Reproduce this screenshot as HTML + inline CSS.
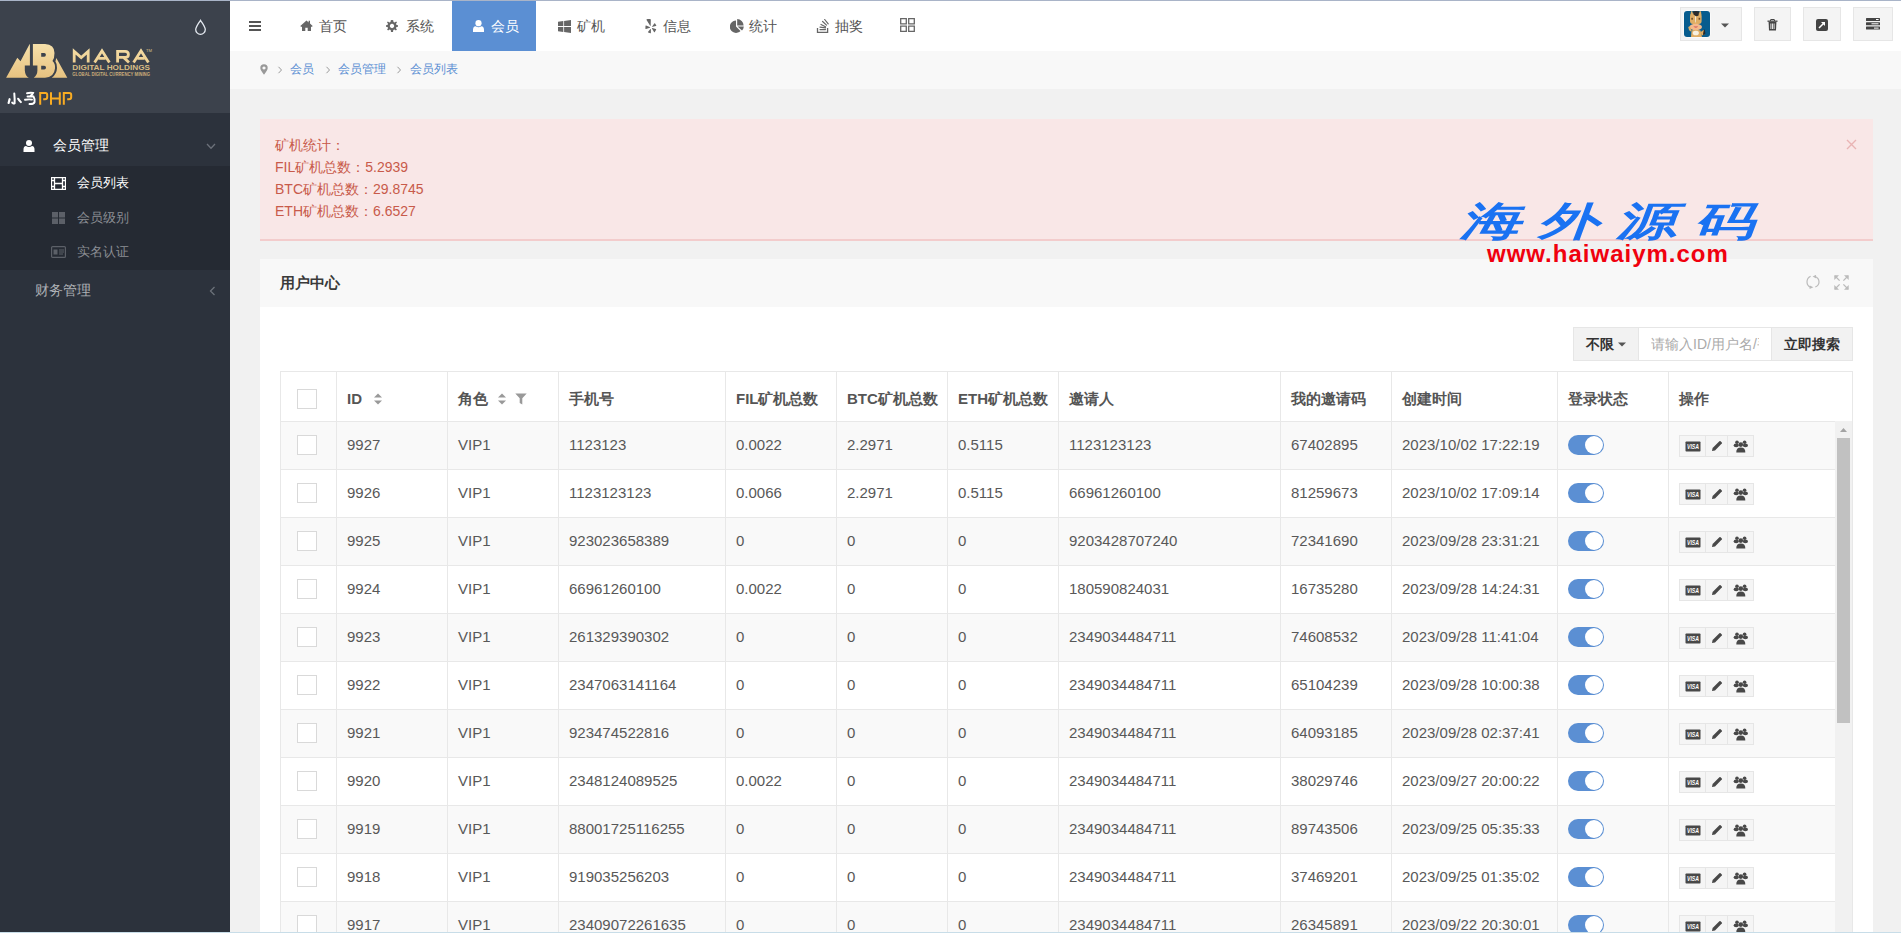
<!DOCTYPE html>
<html><head><meta charset="utf-8">
<style>
*{margin:0;padding:0;box-sizing:border-box}
html,body{width:1901px;height:933px;overflow:hidden;background:#f1f1f1;font-family:"Liberation Sans",sans-serif;font-size:14px;color:#555}
.abs{position:absolute}
.hb{background:#f4f4f4;border:1px solid #e6e6e6}
#topline{position:absolute;left:0;top:0;width:1901px;height:1px;background:#a9b4c8;z-index:50}
#botline{position:absolute;left:0;top:932px;width:1901px;height:1px;background:#c8dde8;z-index:50}
#side{position:absolute;left:0;top:0;width:230px;height:933px;background:#2c323c}
#logo{position:absolute;left:0;top:0;width:230px;height:113px;background:#3c424c}
#sub{position:absolute;left:0;top:166px;width:230px;height:104px;background:#252a33}
.mi{position:absolute;white-space:nowrap;font-size:14px}
#hdr{position:absolute;left:230px;top:0;width:1671px;height:51px;background:#fff}
.tab{position:absolute;top:1px;height:50px;line-height:50px;color:#555;font-size:14px;white-space:nowrap}
.tab.on{background:#5b8fd3;color:#fff}
#bc{position:absolute;left:230px;top:51px;width:1671px;height:38px;background:#f8f8f8;font-size:13px;color:#5b8fd3}
#alert{position:absolute;left:260px;top:119px;width:1613px;height:122px;background:#f9e7e7;border-bottom:2px solid #f3cccc;color:#c85a4a;font-size:14px}
#panel{position:absolute;left:260px;top:259px;width:1613px;height:680px;background:#fff}
#phd{position:absolute;left:0;top:0;width:1613px;height:48px;background:#f8f8f8}
.row{position:absolute;left:281px;width:1554px;height:48px}
.hl{position:absolute;left:280px;width:1573px;height:1px;background:#e8e8e8}
.vl{position:absolute;top:371px;width:1px;height:562px;background:#e8e8e8}
.td{position:absolute;height:48px;line-height:48px;white-space:nowrap;color:#585858;font-size:15px}
.th{position:absolute;top:374px;height:50px;line-height:50px;white-space:nowrap;color:#555;font-weight:bold;font-size:15px}
.cb{position:absolute;left:297px;width:20px;height:20px;border:1px solid #d9d9d9;background:#fff}
.sw{position:absolute;left:1568px;width:36px;height:20px;border-radius:10px;background:#5b8fd3}
.sw i{position:absolute;right:1.5px;top:1px;width:18px;height:18px;border-radius:50%;background:#fff}
.ops{position:absolute;left:1679px;height:22px;display:flex}
.ops b{display:flex;align-items:center;justify-content:center;height:22px;border:1px solid #e6e6e6;background:#f5f5f5;margin-right:-1px}
.o1{width:27px}.o2{width:23px}.o3{width:27px}
</style></head><body>
<div id="topline"></div><div id="botline"></div>
<div id="side">
 <div id="logo">
  <svg class="abs" style="left:0;top:0" width="230" height="113" viewBox="0 0 230 113">
   <defs><linearGradient id="gold" x1="0" y1="44" x2="0" y2="78" gradientUnits="userSpaceOnUse"><stop offset="0" stop-color="#f6e0aa"/><stop offset="1" stop-color="#e7c280"/></linearGradient></defs>
   <path d="M200.5 20.3 C198.5 23.5 195.7 27 195.7 29.5 a4.8 4.8 0 0 0 9.6 0 C205.3 27 202.5 23.5 200.5 20.3Z" fill="none" stroke="#e4e9f0" stroke-width="1.3"/>
   <g fill="url(#gold)">
    <path d="M6.1 77.8 L17.3 57.8 L20.5 61.2 L29.5 44.3 L29.9 44.3 L29.9 65.4 L24.8 65.4 L24.8 70.5 Q25.3 76.5 28.8 77.8 Z"/>
    <path fill-rule="evenodd" d="M32.9 44 L45 44 Q54.5 44.5 54.5 53 Q54.5 58 52.5 61 Q55.5 63.5 55 68.5 Q54 77.5 45 77.8 L33.8 77.8 Q37.4 75 37.4 70.5 L37.4 65.4 L32.9 65.4 Z M41.2 53 L44.2 53 Q45.9 53 45.9 54.85 Q45.9 56.7 44.2 56.7 L41.2 56.7Z M41.2 65.7 L44.2 65.7 Q46 65.7 46 67.6 Q46 69.5 44.2 69.5 L41.2 69.5Z"/>
    <path d="M56.3 58 L67.3 77.8 L51.8 77.8 Q56.8 74 57 68 Q57 63.5 55.4 61.6 Z"/>
   </g>
   <g fill="none" stroke="url(#gold)" stroke-width="2.8" stroke-linejoin="miter">
    <path d="M74.2 62.5 V51.4 L81.2 57.6 L88.2 51.4 V62.5"/>
    <path d="M94.6 62.5 L102 50.8 L109.4 62.5 M98.4 58.4 H105.6"/>
    <path d="M117.6 62.5 V51.4 H125.2 Q128.4 51.4 128.4 54.5 Q128.4 57.4 125.2 57.4 H117.6 M123.6 57.4 L129 62.5"/>
    <path d="M133.6 62.5 L141 50.8 L148.4 62.5 M137.4 58.4 H144.6"/>
   </g>
   <text x="146" y="51.5" font-family="Liberation Sans" font-size="4.2" fill="#d9c08a">TM</text>
   <text x="72.3" y="70" font-family="Liberation Sans" font-weight="bold" font-size="7.2" fill="#d8bc85" textLength="77.7" lengthAdjust="spacingAndGlyphs">DIGITAL HOLDINGS</text>
   <text x="72.3" y="76" font-family="Liberation Sans" font-weight="bold" font-size="5.4" fill="#c9ae7a" textLength="77.7" lengthAdjust="spacingAndGlyphs">GLOBAL DIGITAL CURRENCY MINING</text>
   <g fill="none" stroke="#fff" stroke-linecap="round">
    <path d="M14.3 93.5 Q14.8 99 14.6 103.2 Q13.5 104.2 12.2 102.6" stroke-width="2"/>
    <path d="M9.6 99.2 Q9 101.5 8.6 103" stroke-width="2.2"/>
    <path d="M18.2 98.8 Q19.5 101 20.8 102" stroke-width="2.2"/>
    <path d="M27 93.2 Q30.5 92.4 33 93 Q32 95 30.3 96 M27.5 96.5 H33.5 Q35 99 34.6 102 Q33.5 104.4 29.5 104 M25 99.8 Q29 99 32 99.6" stroke-width="1.9"/>
   </g>
   <g fill="none" stroke="#f9ac22" stroke-width="2">
    <path d="M40.2 104.8 V93 H45.6 Q47.2 93 47.2 95 V97 Q47.2 99.2 45 99.2 H43.2"/>
    <path d="M51 92.3 V104.8 M59.8 92.3 V104.8 M51 98.4 H59.8"/>
    <path d="M63.8 104.8 V93 H69.4 Q71.2 93 71.2 95 V97 Q71.2 99.2 69 99.2 H67.2"/>
   </g>
  </svg>
 </div>
 <div id="sub"></div>
 <svg class="abs" style="left:23px;top:140px" width="12" height="12" viewBox="0 0 12 12"><circle cx="6" cy="3" r="3" fill="#fff"/><path d="M0.5 12 L0.5 9.5 Q0.5 6.3 3 6 Q6 8 9 6 Q11.5 6.3 11.5 9.5 L11.5 12Z" fill="#fff"/></svg>
 <div class="mi" style="left:53px;top:137px;color:#fff">会员管理</div>
 <svg class="abs" style="left:206px;top:143px" width="10" height="7" viewBox="0 0 10 7"><path d="M1 1 L5 5.2 L9 1" fill="none" stroke="#6c717a" stroke-width="1.3"/></svg>
 <svg class="abs" style="left:51px;top:177px" width="15" height="13" viewBox="0 0 15 13"><path d="M0.5 0.5h14v12h-14z M3.5 0.5v12 M11.5 0.5v12 M3.5 6.5h8 M0.5 3.5h3 M0.5 9.5h3 M11.5 3.5h3 M11.5 9.5h3" fill="none" stroke="#fff" stroke-width="1.3"/></svg>
 <div class="mi" style="left:77px;top:174px;color:#fff;font-size:13px">会员列表</div>
 <svg class="abs" style="left:52px;top:212px" width="13" height="12" viewBox="0 0 13 12"><rect x="0" y="0" width="6" height="5.5" fill="#5c6068"/><rect x="7" y="0" width="6" height="5.5" fill="#5c6068"/><rect x="0" y="6.5" width="6" height="5.5" fill="#5c6068"/><rect x="7" y="6.5" width="6" height="5.5" fill="#5c6068"/></svg>
 <div class="mi" style="left:77px;top:209px;color:#8b8e94;font-size:13px">会员级别</div>
 <svg class="abs" style="left:51px;top:246px" width="15" height="12" viewBox="0 0 15 12"><rect x="0.6" y="0.6" width="13.8" height="10.8" rx="1" fill="none" stroke="#5c6068" stroke-width="1.2"/><rect x="2.5" y="3.5" width="4" height="5" fill="#5c6068"/><path d="M8 4h5M8 6h5M8 8h4" stroke="#5c6068" stroke-width="1"/></svg>
 <div class="mi" style="left:77px;top:243px;color:#8b8e94;font-size:13px">实名认证</div>
 <div class="mi" style="left:35px;top:282px;color:#aeb1b6">财务管理</div>
 <svg class="abs" style="left:209px;top:286px" width="7" height="10" viewBox="0 0 7 10"><path d="M5.5 1 L1.5 5 L5.5 9" fill="none" stroke="#6c717a" stroke-width="1.3"/></svg>
</div>
<div id="hdr">
 <svg class="abs" style="left:19px;top:21px" width="12" height="10" viewBox="0 0 12 10"><path d="M0 1h12M0 5h12M0 9h12" stroke="#555" stroke-width="2"/></svg>
 <svg class="abs" style="left:70px;top:20px" width="13" height="11" viewBox="0 0 13 11"><path d="M6.5 0.5 L0.3 6 L1.2 7 L2 6.4 L2 11 L5.3 11 L5.3 7.8 L7.7 7.8 L7.7 11 L11 11 L11 6.4 L11.8 7 L12.7 6 L10 3.6 L10 0.8 L8.6 0.8 L8.6 2.4 Z" fill="#666"/></svg>
 <div class="tab" style="left:89px">首页</div>
 <svg class="abs" style="left:156px;top:20px" width="12" height="12" viewBox="0 0 12 12"><path d="M6 0 L7.2 0.2 L7.5 1.9 L8.7 2.4 L10.1 1.4 L11 2.3 L10 3.8 L10.5 5 L12 5.3 L12 6.7 L10.4 7 L10 8.2 L10.9 9.6 L9.9 10.6 L8.5 9.6 L7.3 10.1 L7 12 L5 12 L4.7 10.1 L3.5 9.6 L2.1 10.6 L1.1 9.6 L2 8.2 L1.6 7 L0 6.7 L0 5.3 L1.5 5 L2 3.8 L1 2.3 L1.9 1.4 L3.3 2.4 L4.5 1.9 L4.8 0.2Z M6 3.8 A2.2 2.2 0 1 0 6.01 3.8Z" fill="#666" fill-rule="evenodd"/></svg>
 <div class="tab" style="left:176px">系统</div>
 <div class="tab on" style="left:222px;width:84px"></div>
 <svg class="abs" style="left:243px;top:20px" width="11" height="12" viewBox="0 0 11 12"><circle cx="5.5" cy="3.2" r="3.1" fill="#fff"/><path d="M0 12 L0 9.8 Q0 6.5 2.6 6.2 Q5.5 8.2 8.4 6.2 Q11 6.5 11 9.8 L11 12Z" fill="#fff"/></svg>
 <div class="tab" style="left:261px;color:#fff">会员</div>
 <svg class="abs" style="left:328px;top:20px" width="13" height="13" viewBox="0 0 13 13"><path d="M0 1.8 L5.3 1.1 L5.3 6.1 L0 6.1Z M6.1 1 L13 0 L13 6.1 L6.1 6.1Z M0 6.9 L5.3 6.9 L5.3 11.9 L0 11.2Z M6.1 6.9 L13 6.9 L13 13 L6.1 12Z" fill="#666"/></svg>
 <div class="tab" style="left:347px">矿机</div>
 <svg class="abs" style="left:415px;top:19px" width="12" height="15" viewBox="0 0 12 15"><path d="M1.4 0.8 Q1.6 0.1 2.6 0.1 L5 0 Q5.8 0 5.8 0.8 L5.7 6.5 Q5.5 7.2 5 6.6Z" fill="#666"/><path d="M6.8 8 L9.3 4.4 Q9.7 4 10.1 4.4 L11.3 6.4 Q11.4 7 10.9 7.1Z" fill="#666"/><path d="M0.5 6.8 Q0.6 6.3 1.1 6.4 L5.2 8.3 Q5.3 8.7 4.9 8.8 L1 10 Q0.5 10 0.4 9.5Z" fill="#666"/><path d="M2.9 12.9 L5.4 10 Q5.9 9.9 5.9 10.3 L5.9 13.9 Q5.8 14.4 5.3 14.3 L3.2 13.6Z" fill="#666"/><path d="M6.8 9.2 Q6.9 8.8 7.3 8.9 L10.9 10.1 Q11.3 10.4 11.1 10.8 L9.8 13.1 Q9.4 13.5 9 13.1Z" fill="#666"/></svg>
 <div class="tab" style="left:433px">信息</div>
 <svg class="abs" style="left:500px;top:19px" width="14" height="14" viewBox="0 0 14 14"><path d="M6 1.5 L6 7.5 L10.5 12 A6.2 6.2 0 1 1 6 1.5Z" fill="#666"/><path d="M7.2 0 A6.6 6.6 0 0 1 13.6 6.4 L7.2 6.4Z" fill="#666"/><path d="M7.6 7.6 L13.8 7.6 A6.6 6.6 0 0 1 12 11.6Z" fill="#666"/></svg>
 <div class="tab" style="left:519px">统计</div>
 <svg class="abs" style="left:586px;top:19px" width="14" height="15" viewBox="0 0 14 15"><path d="M1.5 9 V13.4 H11.6 V9" fill="none" stroke="#666" stroke-width="1.3"/><path d="M4 10.6 H9.5 M4 8.2 L9.5 8.9 M5 5.5 L9.5 7.7 M6.6 2.5 L10.5 6.1 M8.7 0.5 L12.2 4.9" stroke="#666" stroke-width="1.2" stroke-linecap="round"/></svg>
 <div class="tab" style="left:605px">抽奖</div>
 <svg class="abs" style="left:670px;top:18px" width="15" height="14" viewBox="0 0 15 14"><path d="M0.7 0.7h5.6v5.2h-5.6z M8.7 0.7h5.6v5.2h-5.6z M0.7 8.1h5.6v5.2h-5.6z M8.7 8.1h5.6v5.2h-5.6z" fill="none" stroke="#666" stroke-width="1.3"/></svg>
 <!-- right buttons -->
 <div class="abs hb" style="left:1450px;top:7px;width:62px;height:34px"></div>
 <svg class="abs" style="left:1453px;top:10px" width="28" height="28" viewBox="-1 -1 28 28"><rect x="-0.5" y="-0.5" width="27" height="27" rx="4" fill="#fff"/><rect width="26" height="26" rx="3" fill="#075c8e"/><path d="M6.5 4 L7 0.3 L8.3 0.3 L9 3.5Z M15 3.5 L15.6 0.3 L17 0.3 L17.4 4Z" fill="#e0ae65"/><rect x="6" y="2.2" width="11.6" height="10.8" rx="3" fill="#e0ae65"/><path d="M9 0.6 Q12 -0.5 15 0.6 L14.6 4.5 Q13 5.5 12 5.3 L9.5 3.5Z" fill="#2b2b2b"/><path d="M10.9 5.3 L12.2 5.3 L11.9 11.5 L11.3 11.5Z" fill="#f2ead8"/><rect x="7.3" y="6.8" width="1.6" height="1.9" fill="#6b4a2a"/><rect x="14.6" y="6.8" width="1.6" height="1.9" fill="#6b4a2a"/><ellipse cx="11.7" cy="16" rx="6.3" ry="3.2" fill="#f5b98a"/><path d="M9.4 15.2 Q11.8 18.6 14.2 15.2Z" fill="#d9736a"/><path d="M7 26 L7.5 19.5 Q11.7 18.2 16.5 19.5 L18 26Z" fill="#e0ae65"/><ellipse cx="11.8" cy="22" rx="3.1" ry="2.3" fill="#f6f0e0"/><path d="M4.2 16 Q5 15 6 15.6 L7.6 19.5 L6.5 20.5 Q4.5 19 4.2 16Z" fill="#e0ae65"/><path d="M16.8 21 L19.5 19 L21 20 L20.8 23 Q19 24.8 17.5 24Z" fill="#e0ae65"/><path d="M19.8 19 L20.8 18.6 L21.4 22.5 L19.6 24.5 L19 23Z" fill="#2a2a2a"/></svg>
 <svg class="abs" style="left:1491px;top:23px" width="8" height="5" viewBox="0 0 8 5"><path d="M0 0.5h8L4 4.5Z" fill="#555"/></svg>
 <div class="abs hb" style="left:1524px;top:7px;width:37px;height:34px"></div>
 <svg class="abs" style="left:1537px;top:19px" width="11" height="12" viewBox="0 0 11 12"><path d="M0.5 2.2h10" stroke="#444" stroke-width="1.3"/><path d="M3.5 2 L3.5 0.8 Q3.5 0.5 4 0.5 L7 0.5 Q7.5 0.5 7.5 0.8 L7.5 2" fill="none" stroke="#444" stroke-width="1"/><path d="M1.6 3 L9.4 3 L9 11.5 L2 11.5Z" fill="#444"/><path d="M3.9 4.5v5.5M5.5 4.5v5.5M7.1 4.5v5.5" stroke="#f4f4f4" stroke-width="0.9"/></svg>
 <div class="abs hb" style="left:1573px;top:7px;width:38px;height:34px"></div>
 <svg class="abs" style="left:1586px;top:19px" width="12" height="12" viewBox="0 0 12 12"><rect width="12" height="12" rx="2" fill="#444"/><path d="M3 9 L8.2 3.8" stroke="#fff" stroke-width="1.5"/><path d="M5 3 L9 3 L9 7Z" fill="#fff"/></svg>
 <div class="abs hb" style="left:1623px;top:7px;width:40px;height:34px"></div>
 <svg class="abs" style="left:1636px;top:18px" width="14" height="12" viewBox="0 0 14 12"><rect x="0" y="0" width="14" height="3" rx="0.5" fill="#444"/><rect x="0" y="4.3" width="14" height="3" rx="0.5" fill="#444"/><rect x="0" y="8.6" width="14" height="3" rx="0.5" fill="#444"/><path d="M10 1.5h2.6M5.5 5.8h7M8 10.1h4.6" stroke="#fff" stroke-width="1"/></svg>
</div>
<div id="bc">
 <svg class="abs" style="left:30px;top:13px" width="8" height="11" viewBox="0 0 8 11"><path d="M4 0.3 A3.7 3.7 0 0 1 7.7 4 Q7.7 6 4 10.8 Q0.3 6 0.3 4 A3.7 3.7 0 0 1 4 0.3Z M4 2.4 A1.6 1.6 0 1 0 4.01 2.4Z" fill="#999" fill-rule="evenodd"/></svg>
 <svg class="abs" style="left:47px;top:15px" width="6" height="8" viewBox="0 0 6 8"><path d="M1.5 0.8 L4.5 4 L1.5 7.2" fill="none" stroke="#999" stroke-width="1"/></svg>
 <div class="abs" style="left:60px;top:10px;font-size:12px;line-height:16px">会员</div>
 <svg class="abs" style="left:95px;top:15px" width="6" height="8" viewBox="0 0 6 8"><path d="M1.5 0.8 L4.5 4 L1.5 7.2" fill="none" stroke="#999" stroke-width="1"/></svg>
 <div class="abs" style="left:108px;top:10px;font-size:12px;line-height:16px">会员管理</div>
 <svg class="abs" style="left:166px;top:15px" width="6" height="8" viewBox="0 0 6 8"><path d="M1.5 0.8 L4.5 4 L1.5 7.2" fill="none" stroke="#999" stroke-width="1"/></svg>
 <div class="abs" style="left:180px;top:10px;font-size:12px;line-height:16px">会员列表</div>
</div>
<div id="alert">
 <div class="abs" style="left:15px;top:15px;line-height:22px">矿机统计：<br>FIL矿机总数：5.2939<br>BTC矿机总数：29.8745<br>ETH矿机总数：6.6527</div>
 <svg class="abs" style="left:1586px;top:20px" width="11" height="11" viewBox="0 0 11 11"><path d="M1 1L10 10M10 1L1 10" stroke="#e9b4b4" stroke-width="1.4"/></svg>
</div>
<div id="panel"><div id="phd"><div class="abs" style="left:20px;top:0;line-height:48px;font-weight:bold;color:#3a3a3a;font-size:15px">用户中心</div>
 <svg class="abs" style="left:1546px;top:16px" width="14" height="15" viewBox="0 0 14 15"><path d="M4.6 1.3 Q1 3 1 7 Q1 10.8 4.8 12.4" fill="none" stroke="#bbb" stroke-width="1.2"/><path d="M3.8 10.4 L7.4 12.2 L3.6 14Z" fill="#bbb"/><path d="M9.3 12 Q13 10.5 13 7 Q13 3 9 1.5" fill="none" stroke="#bbb" stroke-width="1.2"/><path d="M10 -0.2 L6.6 1.5 L10.2 3.4Z" fill="#bbb"/></svg><svg class="abs" style="left:1574px;top:16px" width="15" height="15" viewBox="0 0 15 15"><path d="M1 1 L5.6 5.6 M14 1 L9.4 5.6 M1 14 L5.6 9.4 M14 14 L9.4 9.4" stroke="#bbb" stroke-width="1.3"/><path d="M0.3 0.3 H5 L0.3 5Z M14.7 0.3 H10 L14.7 5Z M0.3 14.7 H5 L0.3 10Z M14.7 14.7 H10 L14.7 10Z" fill="#bbb"/></svg>
</div>
 <div class="abs" style="left:1313px;top:68px;width:280px;height:34px;border:1px solid #e6e6e6;background:#fff"></div>
 <div class="abs" style="left:1313px;top:68px;width:66px;height:34px;border:1px solid #e6e6e6;background:#f2f2f2"></div>
 <div class="abs" style="left:1326px;top:68px;line-height:34px;color:#333;font-size:14px;font-weight:bold">不限</div>
 <svg class="abs" style="left:1358px;top:83px" width="8" height="5" viewBox="0 0 8 5"><path d="M0 0.5h8L4 4.5Z" fill="#555"/></svg>
 <div class="abs" style="left:1391px;top:68px;width:108px;overflow:hidden;line-height:34px;color:#aaa;font-size:14px;white-space:nowrap">请输入ID/用户名/手机号</div>
 <div class="abs" style="left:1511px;top:68px;width:82px;height:34px;border:1px solid #e6e6e6;background:#f2f2f2"></div>
 <div class="abs" style="left:1524px;top:68px;line-height:34px;color:#333;font-size:14px;font-weight:bold">立即搜索</div>
</div>
<div class="abs" style="left:280px;top:371px;width:1573px;height:562px;border:1px solid #e8e8e8;border-bottom:none;background:#fff"></div>
<div id="tbl">
 <div class="cb" style="top:389px"></div>
 <div class="th" style="left:347px">ID</div>
 <svg class="abs" style="left:373px;top:393px" width="10" height="12" viewBox="0 0 10 12"><path d="M5 0.5L9 4.5H1Z M5 11.5L9 7.5H1Z" fill="#999"/></svg>
 <div class="th" style="left:458px">角色</div>
 <svg class="abs" style="left:497px;top:393px" width="10" height="12" viewBox="0 0 10 12"><path d="M5 0.5L9 4.5H1Z M5 11.5L9 7.5H1Z" fill="#999"/></svg>
 <svg class="abs" style="left:515px;top:393px" width="12" height="12" viewBox="0 0 12 12"><path d="M0.3 0.5H11.7L7.3 5.2V11.5L4.7 10V5.2Z" fill="#999"/></svg>
 <div class="th" style="left:569px">手机号</div>
 <div class="th" style="left:736px">FIL矿机总数</div>
 <div class="th" style="left:847px">BTC矿机总数</div>
 <div class="th" style="left:958px">ETH矿机总数</div>
 <div class="th" style="left:1069px">邀请人</div>
 <div class="th" style="left:1291px">我的邀请码</div>
 <div class="th" style="left:1402px">创建时间</div>
 <div class="th" style="left:1568px">登录状态</div>
 <div class="th" style="left:1679px">操作</div>
<div class="row" style="top:421px;background:#f9f9f9"></div>
<div class="cb" style="top:435px"></div>
<div class="td" style="left:347px;top:421px">9927</div>
<div class="td" style="left:458px;top:421px">VIP1</div>
<div class="td" style="left:569px;top:421px">1123123</div>
<div class="td" style="left:736px;top:421px">0.0022</div>
<div class="td" style="left:847px;top:421px">2.2971</div>
<div class="td" style="left:958px;top:421px">0.5115</div>
<div class="td" style="left:1069px;top:421px">1123123123</div>
<div class="td" style="left:1291px;top:421px">67402895</div>
<div class="td" style="left:1402px;top:421px">2023/10/02 17:22:19</div>
<div class="sw" style="top:435px"><i></i></div>
<div class="ops" style="top:435px"><b class="o1"><svg width="16" height="11" viewBox="0 0 16 11" style="margin-top:1px"><rect x="0.5" y="0.5" width="15" height="10" rx="0.8" fill="#484848"/><text x="8" y="7.6" font-size="6.8" font-weight="bold" font-style="italic" fill="#fff" text-anchor="middle" font-family="Liberation Sans" textLength="12" lengthAdjust="spacingAndGlyphs">VISA</text></svg></b><b class="o2"><svg width="12" height="12" viewBox="0 0 12 12"><path d="M1 11 L1.6 8 L8.4 1.2 Q9 0.7 9.6 1.2 L10.8 2.4 Q11.3 3 10.8 3.6 L4 10.4 Z" fill="#484848"/></svg></b><b class="o3"><svg width="16" height="13" viewBox="0 0 16 13" style="margin-top:1px"><circle cx="4" cy="2.2" r="1.8" fill="#484848"/><circle cx="11.6" cy="2.2" r="1.8" fill="#484848"/><ellipse cx="3.2" cy="5.4" rx="2.6" ry="1.8" fill="#484848"/><ellipse cx="12.4" cy="5.4" rx="2.6" ry="1.8" fill="#484848"/><circle cx="7.8" cy="4.6" r="2.3" fill="#484848"/><path d="M3.3 12.6 Q3 7.4 7.8 7.4 Q12.6 7.4 12.3 12.6 Z" fill="#484848"/></svg></b></div>
<div class="row" style="top:469px;background:#fff"></div>
<div class="cb" style="top:483px"></div>
<div class="td" style="left:347px;top:469px">9926</div>
<div class="td" style="left:458px;top:469px">VIP1</div>
<div class="td" style="left:569px;top:469px">1123123123</div>
<div class="td" style="left:736px;top:469px">0.0066</div>
<div class="td" style="left:847px;top:469px">2.2971</div>
<div class="td" style="left:958px;top:469px">0.5115</div>
<div class="td" style="left:1069px;top:469px">66961260100</div>
<div class="td" style="left:1291px;top:469px">81259673</div>
<div class="td" style="left:1402px;top:469px">2023/10/02 17:09:14</div>
<div class="sw" style="top:483px"><i></i></div>
<div class="ops" style="top:483px"><b class="o1"><svg width="16" height="11" viewBox="0 0 16 11" style="margin-top:1px"><rect x="0.5" y="0.5" width="15" height="10" rx="0.8" fill="#484848"/><text x="8" y="7.6" font-size="6.8" font-weight="bold" font-style="italic" fill="#fff" text-anchor="middle" font-family="Liberation Sans" textLength="12" lengthAdjust="spacingAndGlyphs">VISA</text></svg></b><b class="o2"><svg width="12" height="12" viewBox="0 0 12 12"><path d="M1 11 L1.6 8 L8.4 1.2 Q9 0.7 9.6 1.2 L10.8 2.4 Q11.3 3 10.8 3.6 L4 10.4 Z" fill="#484848"/></svg></b><b class="o3"><svg width="16" height="13" viewBox="0 0 16 13" style="margin-top:1px"><circle cx="4" cy="2.2" r="1.8" fill="#484848"/><circle cx="11.6" cy="2.2" r="1.8" fill="#484848"/><ellipse cx="3.2" cy="5.4" rx="2.6" ry="1.8" fill="#484848"/><ellipse cx="12.4" cy="5.4" rx="2.6" ry="1.8" fill="#484848"/><circle cx="7.8" cy="4.6" r="2.3" fill="#484848"/><path d="M3.3 12.6 Q3 7.4 7.8 7.4 Q12.6 7.4 12.3 12.6 Z" fill="#484848"/></svg></b></div>
<div class="row" style="top:517px;background:#f9f9f9"></div>
<div class="cb" style="top:531px"></div>
<div class="td" style="left:347px;top:517px">9925</div>
<div class="td" style="left:458px;top:517px">VIP1</div>
<div class="td" style="left:569px;top:517px">923023658389</div>
<div class="td" style="left:736px;top:517px">0</div>
<div class="td" style="left:847px;top:517px">0</div>
<div class="td" style="left:958px;top:517px">0</div>
<div class="td" style="left:1069px;top:517px">9203428707240</div>
<div class="td" style="left:1291px;top:517px">72341690</div>
<div class="td" style="left:1402px;top:517px">2023/09/28 23:31:21</div>
<div class="sw" style="top:531px"><i></i></div>
<div class="ops" style="top:531px"><b class="o1"><svg width="16" height="11" viewBox="0 0 16 11" style="margin-top:1px"><rect x="0.5" y="0.5" width="15" height="10" rx="0.8" fill="#484848"/><text x="8" y="7.6" font-size="6.8" font-weight="bold" font-style="italic" fill="#fff" text-anchor="middle" font-family="Liberation Sans" textLength="12" lengthAdjust="spacingAndGlyphs">VISA</text></svg></b><b class="o2"><svg width="12" height="12" viewBox="0 0 12 12"><path d="M1 11 L1.6 8 L8.4 1.2 Q9 0.7 9.6 1.2 L10.8 2.4 Q11.3 3 10.8 3.6 L4 10.4 Z" fill="#484848"/></svg></b><b class="o3"><svg width="16" height="13" viewBox="0 0 16 13" style="margin-top:1px"><circle cx="4" cy="2.2" r="1.8" fill="#484848"/><circle cx="11.6" cy="2.2" r="1.8" fill="#484848"/><ellipse cx="3.2" cy="5.4" rx="2.6" ry="1.8" fill="#484848"/><ellipse cx="12.4" cy="5.4" rx="2.6" ry="1.8" fill="#484848"/><circle cx="7.8" cy="4.6" r="2.3" fill="#484848"/><path d="M3.3 12.6 Q3 7.4 7.8 7.4 Q12.6 7.4 12.3 12.6 Z" fill="#484848"/></svg></b></div>
<div class="row" style="top:565px;background:#fff"></div>
<div class="cb" style="top:579px"></div>
<div class="td" style="left:347px;top:565px">9924</div>
<div class="td" style="left:458px;top:565px">VIP1</div>
<div class="td" style="left:569px;top:565px">66961260100</div>
<div class="td" style="left:736px;top:565px">0.0022</div>
<div class="td" style="left:847px;top:565px">0</div>
<div class="td" style="left:958px;top:565px">0</div>
<div class="td" style="left:1069px;top:565px">180590824031</div>
<div class="td" style="left:1291px;top:565px">16735280</div>
<div class="td" style="left:1402px;top:565px">2023/09/28 14:24:31</div>
<div class="sw" style="top:579px"><i></i></div>
<div class="ops" style="top:579px"><b class="o1"><svg width="16" height="11" viewBox="0 0 16 11" style="margin-top:1px"><rect x="0.5" y="0.5" width="15" height="10" rx="0.8" fill="#484848"/><text x="8" y="7.6" font-size="6.8" font-weight="bold" font-style="italic" fill="#fff" text-anchor="middle" font-family="Liberation Sans" textLength="12" lengthAdjust="spacingAndGlyphs">VISA</text></svg></b><b class="o2"><svg width="12" height="12" viewBox="0 0 12 12"><path d="M1 11 L1.6 8 L8.4 1.2 Q9 0.7 9.6 1.2 L10.8 2.4 Q11.3 3 10.8 3.6 L4 10.4 Z" fill="#484848"/></svg></b><b class="o3"><svg width="16" height="13" viewBox="0 0 16 13" style="margin-top:1px"><circle cx="4" cy="2.2" r="1.8" fill="#484848"/><circle cx="11.6" cy="2.2" r="1.8" fill="#484848"/><ellipse cx="3.2" cy="5.4" rx="2.6" ry="1.8" fill="#484848"/><ellipse cx="12.4" cy="5.4" rx="2.6" ry="1.8" fill="#484848"/><circle cx="7.8" cy="4.6" r="2.3" fill="#484848"/><path d="M3.3 12.6 Q3 7.4 7.8 7.4 Q12.6 7.4 12.3 12.6 Z" fill="#484848"/></svg></b></div>
<div class="row" style="top:613px;background:#f9f9f9"></div>
<div class="cb" style="top:627px"></div>
<div class="td" style="left:347px;top:613px">9923</div>
<div class="td" style="left:458px;top:613px">VIP1</div>
<div class="td" style="left:569px;top:613px">261329390302</div>
<div class="td" style="left:736px;top:613px">0</div>
<div class="td" style="left:847px;top:613px">0</div>
<div class="td" style="left:958px;top:613px">0</div>
<div class="td" style="left:1069px;top:613px">2349034484711</div>
<div class="td" style="left:1291px;top:613px">74608532</div>
<div class="td" style="left:1402px;top:613px">2023/09/28 11:41:04</div>
<div class="sw" style="top:627px"><i></i></div>
<div class="ops" style="top:627px"><b class="o1"><svg width="16" height="11" viewBox="0 0 16 11" style="margin-top:1px"><rect x="0.5" y="0.5" width="15" height="10" rx="0.8" fill="#484848"/><text x="8" y="7.6" font-size="6.8" font-weight="bold" font-style="italic" fill="#fff" text-anchor="middle" font-family="Liberation Sans" textLength="12" lengthAdjust="spacingAndGlyphs">VISA</text></svg></b><b class="o2"><svg width="12" height="12" viewBox="0 0 12 12"><path d="M1 11 L1.6 8 L8.4 1.2 Q9 0.7 9.6 1.2 L10.8 2.4 Q11.3 3 10.8 3.6 L4 10.4 Z" fill="#484848"/></svg></b><b class="o3"><svg width="16" height="13" viewBox="0 0 16 13" style="margin-top:1px"><circle cx="4" cy="2.2" r="1.8" fill="#484848"/><circle cx="11.6" cy="2.2" r="1.8" fill="#484848"/><ellipse cx="3.2" cy="5.4" rx="2.6" ry="1.8" fill="#484848"/><ellipse cx="12.4" cy="5.4" rx="2.6" ry="1.8" fill="#484848"/><circle cx="7.8" cy="4.6" r="2.3" fill="#484848"/><path d="M3.3 12.6 Q3 7.4 7.8 7.4 Q12.6 7.4 12.3 12.6 Z" fill="#484848"/></svg></b></div>
<div class="row" style="top:661px;background:#fff"></div>
<div class="cb" style="top:675px"></div>
<div class="td" style="left:347px;top:661px">9922</div>
<div class="td" style="left:458px;top:661px">VIP1</div>
<div class="td" style="left:569px;top:661px">2347063141164</div>
<div class="td" style="left:736px;top:661px">0</div>
<div class="td" style="left:847px;top:661px">0</div>
<div class="td" style="left:958px;top:661px">0</div>
<div class="td" style="left:1069px;top:661px">2349034484711</div>
<div class="td" style="left:1291px;top:661px">65104239</div>
<div class="td" style="left:1402px;top:661px">2023/09/28 10:00:38</div>
<div class="sw" style="top:675px"><i></i></div>
<div class="ops" style="top:675px"><b class="o1"><svg width="16" height="11" viewBox="0 0 16 11" style="margin-top:1px"><rect x="0.5" y="0.5" width="15" height="10" rx="0.8" fill="#484848"/><text x="8" y="7.6" font-size="6.8" font-weight="bold" font-style="italic" fill="#fff" text-anchor="middle" font-family="Liberation Sans" textLength="12" lengthAdjust="spacingAndGlyphs">VISA</text></svg></b><b class="o2"><svg width="12" height="12" viewBox="0 0 12 12"><path d="M1 11 L1.6 8 L8.4 1.2 Q9 0.7 9.6 1.2 L10.8 2.4 Q11.3 3 10.8 3.6 L4 10.4 Z" fill="#484848"/></svg></b><b class="o3"><svg width="16" height="13" viewBox="0 0 16 13" style="margin-top:1px"><circle cx="4" cy="2.2" r="1.8" fill="#484848"/><circle cx="11.6" cy="2.2" r="1.8" fill="#484848"/><ellipse cx="3.2" cy="5.4" rx="2.6" ry="1.8" fill="#484848"/><ellipse cx="12.4" cy="5.4" rx="2.6" ry="1.8" fill="#484848"/><circle cx="7.8" cy="4.6" r="2.3" fill="#484848"/><path d="M3.3 12.6 Q3 7.4 7.8 7.4 Q12.6 7.4 12.3 12.6 Z" fill="#484848"/></svg></b></div>
<div class="row" style="top:709px;background:#f9f9f9"></div>
<div class="cb" style="top:723px"></div>
<div class="td" style="left:347px;top:709px">9921</div>
<div class="td" style="left:458px;top:709px">VIP1</div>
<div class="td" style="left:569px;top:709px">923474522816</div>
<div class="td" style="left:736px;top:709px">0</div>
<div class="td" style="left:847px;top:709px">0</div>
<div class="td" style="left:958px;top:709px">0</div>
<div class="td" style="left:1069px;top:709px">2349034484711</div>
<div class="td" style="left:1291px;top:709px">64093185</div>
<div class="td" style="left:1402px;top:709px">2023/09/28 02:37:41</div>
<div class="sw" style="top:723px"><i></i></div>
<div class="ops" style="top:723px"><b class="o1"><svg width="16" height="11" viewBox="0 0 16 11" style="margin-top:1px"><rect x="0.5" y="0.5" width="15" height="10" rx="0.8" fill="#484848"/><text x="8" y="7.6" font-size="6.8" font-weight="bold" font-style="italic" fill="#fff" text-anchor="middle" font-family="Liberation Sans" textLength="12" lengthAdjust="spacingAndGlyphs">VISA</text></svg></b><b class="o2"><svg width="12" height="12" viewBox="0 0 12 12"><path d="M1 11 L1.6 8 L8.4 1.2 Q9 0.7 9.6 1.2 L10.8 2.4 Q11.3 3 10.8 3.6 L4 10.4 Z" fill="#484848"/></svg></b><b class="o3"><svg width="16" height="13" viewBox="0 0 16 13" style="margin-top:1px"><circle cx="4" cy="2.2" r="1.8" fill="#484848"/><circle cx="11.6" cy="2.2" r="1.8" fill="#484848"/><ellipse cx="3.2" cy="5.4" rx="2.6" ry="1.8" fill="#484848"/><ellipse cx="12.4" cy="5.4" rx="2.6" ry="1.8" fill="#484848"/><circle cx="7.8" cy="4.6" r="2.3" fill="#484848"/><path d="M3.3 12.6 Q3 7.4 7.8 7.4 Q12.6 7.4 12.3 12.6 Z" fill="#484848"/></svg></b></div>
<div class="row" style="top:757px;background:#fff"></div>
<div class="cb" style="top:771px"></div>
<div class="td" style="left:347px;top:757px">9920</div>
<div class="td" style="left:458px;top:757px">VIP1</div>
<div class="td" style="left:569px;top:757px">2348124089525</div>
<div class="td" style="left:736px;top:757px">0.0022</div>
<div class="td" style="left:847px;top:757px">0</div>
<div class="td" style="left:958px;top:757px">0</div>
<div class="td" style="left:1069px;top:757px">2349034484711</div>
<div class="td" style="left:1291px;top:757px">38029746</div>
<div class="td" style="left:1402px;top:757px">2023/09/27 20:00:22</div>
<div class="sw" style="top:771px"><i></i></div>
<div class="ops" style="top:771px"><b class="o1"><svg width="16" height="11" viewBox="0 0 16 11" style="margin-top:1px"><rect x="0.5" y="0.5" width="15" height="10" rx="0.8" fill="#484848"/><text x="8" y="7.6" font-size="6.8" font-weight="bold" font-style="italic" fill="#fff" text-anchor="middle" font-family="Liberation Sans" textLength="12" lengthAdjust="spacingAndGlyphs">VISA</text></svg></b><b class="o2"><svg width="12" height="12" viewBox="0 0 12 12"><path d="M1 11 L1.6 8 L8.4 1.2 Q9 0.7 9.6 1.2 L10.8 2.4 Q11.3 3 10.8 3.6 L4 10.4 Z" fill="#484848"/></svg></b><b class="o3"><svg width="16" height="13" viewBox="0 0 16 13" style="margin-top:1px"><circle cx="4" cy="2.2" r="1.8" fill="#484848"/><circle cx="11.6" cy="2.2" r="1.8" fill="#484848"/><ellipse cx="3.2" cy="5.4" rx="2.6" ry="1.8" fill="#484848"/><ellipse cx="12.4" cy="5.4" rx="2.6" ry="1.8" fill="#484848"/><circle cx="7.8" cy="4.6" r="2.3" fill="#484848"/><path d="M3.3 12.6 Q3 7.4 7.8 7.4 Q12.6 7.4 12.3 12.6 Z" fill="#484848"/></svg></b></div>
<div class="row" style="top:805px;background:#f9f9f9"></div>
<div class="cb" style="top:819px"></div>
<div class="td" style="left:347px;top:805px">9919</div>
<div class="td" style="left:458px;top:805px">VIP1</div>
<div class="td" style="left:569px;top:805px">88001725116255</div>
<div class="td" style="left:736px;top:805px">0</div>
<div class="td" style="left:847px;top:805px">0</div>
<div class="td" style="left:958px;top:805px">0</div>
<div class="td" style="left:1069px;top:805px">2349034484711</div>
<div class="td" style="left:1291px;top:805px">89743506</div>
<div class="td" style="left:1402px;top:805px">2023/09/25 05:35:33</div>
<div class="sw" style="top:819px"><i></i></div>
<div class="ops" style="top:819px"><b class="o1"><svg width="16" height="11" viewBox="0 0 16 11" style="margin-top:1px"><rect x="0.5" y="0.5" width="15" height="10" rx="0.8" fill="#484848"/><text x="8" y="7.6" font-size="6.8" font-weight="bold" font-style="italic" fill="#fff" text-anchor="middle" font-family="Liberation Sans" textLength="12" lengthAdjust="spacingAndGlyphs">VISA</text></svg></b><b class="o2"><svg width="12" height="12" viewBox="0 0 12 12"><path d="M1 11 L1.6 8 L8.4 1.2 Q9 0.7 9.6 1.2 L10.8 2.4 Q11.3 3 10.8 3.6 L4 10.4 Z" fill="#484848"/></svg></b><b class="o3"><svg width="16" height="13" viewBox="0 0 16 13" style="margin-top:1px"><circle cx="4" cy="2.2" r="1.8" fill="#484848"/><circle cx="11.6" cy="2.2" r="1.8" fill="#484848"/><ellipse cx="3.2" cy="5.4" rx="2.6" ry="1.8" fill="#484848"/><ellipse cx="12.4" cy="5.4" rx="2.6" ry="1.8" fill="#484848"/><circle cx="7.8" cy="4.6" r="2.3" fill="#484848"/><path d="M3.3 12.6 Q3 7.4 7.8 7.4 Q12.6 7.4 12.3 12.6 Z" fill="#484848"/></svg></b></div>
<div class="row" style="top:853px;background:#fff"></div>
<div class="cb" style="top:867px"></div>
<div class="td" style="left:347px;top:853px">9918</div>
<div class="td" style="left:458px;top:853px">VIP1</div>
<div class="td" style="left:569px;top:853px">919035256203</div>
<div class="td" style="left:736px;top:853px">0</div>
<div class="td" style="left:847px;top:853px">0</div>
<div class="td" style="left:958px;top:853px">0</div>
<div class="td" style="left:1069px;top:853px">2349034484711</div>
<div class="td" style="left:1291px;top:853px">37469201</div>
<div class="td" style="left:1402px;top:853px">2023/09/25 01:35:02</div>
<div class="sw" style="top:867px"><i></i></div>
<div class="ops" style="top:867px"><b class="o1"><svg width="16" height="11" viewBox="0 0 16 11" style="margin-top:1px"><rect x="0.5" y="0.5" width="15" height="10" rx="0.8" fill="#484848"/><text x="8" y="7.6" font-size="6.8" font-weight="bold" font-style="italic" fill="#fff" text-anchor="middle" font-family="Liberation Sans" textLength="12" lengthAdjust="spacingAndGlyphs">VISA</text></svg></b><b class="o2"><svg width="12" height="12" viewBox="0 0 12 12"><path d="M1 11 L1.6 8 L8.4 1.2 Q9 0.7 9.6 1.2 L10.8 2.4 Q11.3 3 10.8 3.6 L4 10.4 Z" fill="#484848"/></svg></b><b class="o3"><svg width="16" height="13" viewBox="0 0 16 13" style="margin-top:1px"><circle cx="4" cy="2.2" r="1.8" fill="#484848"/><circle cx="11.6" cy="2.2" r="1.8" fill="#484848"/><ellipse cx="3.2" cy="5.4" rx="2.6" ry="1.8" fill="#484848"/><ellipse cx="12.4" cy="5.4" rx="2.6" ry="1.8" fill="#484848"/><circle cx="7.8" cy="4.6" r="2.3" fill="#484848"/><path d="M3.3 12.6 Q3 7.4 7.8 7.4 Q12.6 7.4 12.3 12.6 Z" fill="#484848"/></svg></b></div>
<div class="row" style="top:901px;background:#f9f9f9"></div>
<div class="cb" style="top:915px"></div>
<div class="td" style="left:347px;top:901px">9917</div>
<div class="td" style="left:458px;top:901px">VIP1</div>
<div class="td" style="left:569px;top:901px">23409072261635</div>
<div class="td" style="left:736px;top:901px">0</div>
<div class="td" style="left:847px;top:901px">0</div>
<div class="td" style="left:958px;top:901px">0</div>
<div class="td" style="left:1069px;top:901px">2349034484711</div>
<div class="td" style="left:1291px;top:901px">26345891</div>
<div class="td" style="left:1402px;top:901px">2023/09/22 20:30:01</div>
<div class="sw" style="top:915px"><i></i></div>
<div class="ops" style="top:915px"><b class="o1"><svg width="16" height="11" viewBox="0 0 16 11" style="margin-top:1px"><rect x="0.5" y="0.5" width="15" height="10" rx="0.8" fill="#484848"/><text x="8" y="7.6" font-size="6.8" font-weight="bold" font-style="italic" fill="#fff" text-anchor="middle" font-family="Liberation Sans" textLength="12" lengthAdjust="spacingAndGlyphs">VISA</text></svg></b><b class="o2"><svg width="12" height="12" viewBox="0 0 12 12"><path d="M1 11 L1.6 8 L8.4 1.2 Q9 0.7 9.6 1.2 L10.8 2.4 Q11.3 3 10.8 3.6 L4 10.4 Z" fill="#484848"/></svg></b><b class="o3"><svg width="16" height="13" viewBox="0 0 16 13" style="margin-top:1px"><circle cx="4" cy="2.2" r="1.8" fill="#484848"/><circle cx="11.6" cy="2.2" r="1.8" fill="#484848"/><ellipse cx="3.2" cy="5.4" rx="2.6" ry="1.8" fill="#484848"/><ellipse cx="12.4" cy="5.4" rx="2.6" ry="1.8" fill="#484848"/><circle cx="7.8" cy="4.6" r="2.3" fill="#484848"/><path d="M3.3 12.6 Q3 7.4 7.8 7.4 Q12.6 7.4 12.3 12.6 Z" fill="#484848"/></svg></b></div>
<div class="hl" style="top:421px;width:1555px"></div>
<div class="hl" style="top:469px;width:1555px"></div>
<div class="hl" style="top:517px;width:1555px"></div>
<div class="hl" style="top:565px;width:1555px"></div>
<div class="hl" style="top:613px;width:1555px"></div>
<div class="hl" style="top:661px;width:1555px"></div>
<div class="hl" style="top:709px;width:1555px"></div>
<div class="hl" style="top:757px;width:1555px"></div>
<div class="hl" style="top:805px;width:1555px"></div>
<div class="hl" style="top:853px;width:1555px"></div>
<div class="hl" style="top:901px;width:1555px"></div>
<div class="hl" style="top:949px;width:1555px"></div>
<div class="vl" style="left:336px"></div>
<div class="vl" style="left:447px"></div>
<div class="vl" style="left:558px"></div>
<div class="vl" style="left:725px"></div>
<div class="vl" style="left:836px"></div>
<div class="vl" style="left:947px"></div>
<div class="vl" style="left:1058px"></div>
<div class="vl" style="left:1280px"></div>
<div class="vl" style="left:1391px"></div>
<div class="vl" style="left:1557px"></div>
<div class="vl" style="left:1668px"></div> <div class="abs" style="left:1835px;top:421px;width:17px;height:512px;background:#f1f1f1"></div>
 <svg class="abs" style="left:1839px;top:427px" width="9" height="6" viewBox="0 0 9 6"><path d="M4.5 1L8 5H1Z" fill="#a3a3a3"/></svg>
 <div class="abs" style="left:1837px;top:438px;width:13px;height:285px;background:#c1c1c1"></div>
 <div class="abs" style="left:1460px;top:195px;color:#1a72f2;font-size:40px;line-height:52px;font-weight:bold;font-style:italic;letter-spacing:12px;white-space:nowrap;z-index:20;transform:scaleX(1.5);transform-origin:0 0">海外源码</div>
 <div class="abs" style="left:1487px;top:238px;color:#f0000e;font-size:24px;font-weight:bold;white-space:nowrap;z-index:20;line-height:32px;letter-spacing:1px">www.haiwaiym.com</div>

</div></body></html>
